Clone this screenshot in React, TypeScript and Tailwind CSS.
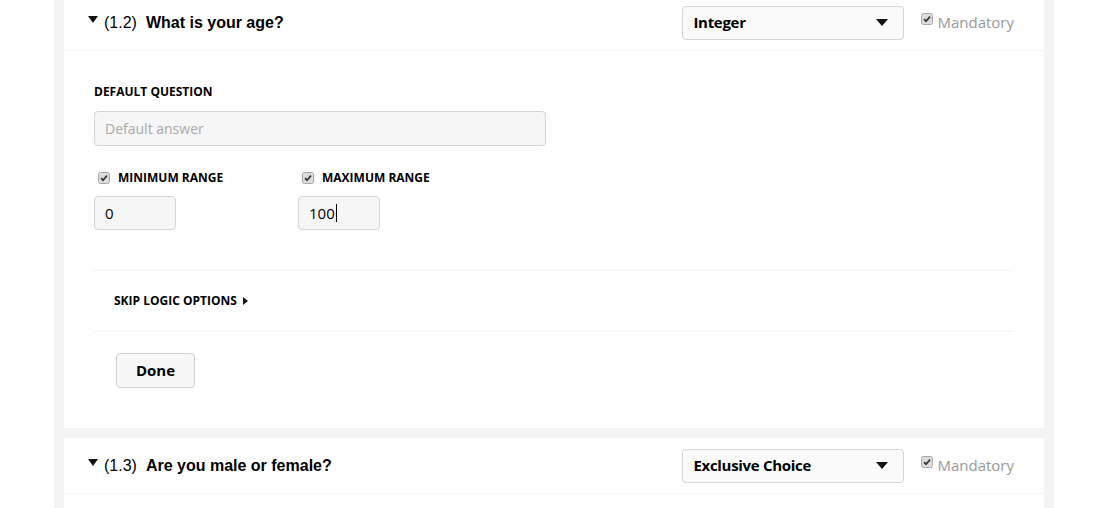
import React from "react";

const label = "font-['Open_Sans',sans-serif] text-[12px] font-bold uppercase leading-[18px] text-black";

function Caret({ w = 12 }: { w?: number }) {
  return (
    <svg width={w} height="7" viewBox="0 0 12 7" preserveAspectRatio="none" className="shrink-0">
      <path d="M0 0h12L6 7z" fill="#111" />
    </svg>
  );
}

function Check() {
  return (
    <svg width="12" height="12" viewBox="0 0 12 12" className="shrink-0">
      <rect x="0.5" y="0.5" width="11" height="11" rx="2" fill="#dcdcdc" stroke="#a8a8a8" />
      <path d="M3 6.2l2 2 4-4.6" fill="none" stroke="#333" strokeWidth="1.7" />
    </svg>
  );
}

function Header({ num, title, type }: { num: string; title: string; type: string }) {
  return (
    <header className="flex h-[56px] items-center border-b border-[#f4f4f4] pl-[24px] pr-[30px]">
      <div className="flex items-center font-['Liberation_Sans',sans-serif] text-[16px] text-black">
        <span className="-mt-[6px] mr-[6px]">
          <Caret w={10} />
        </span>
        <span>{num}</span>
        <span className="ml-[9px] font-bold">{title}</span>
      </div>
      <div className="ml-auto flex h-[34px] w-[222px] items-center justify-between rounded-[4px] border border-[#d5d5d5] bg-[#fafafa] pl-[10px] pr-[15px] font-['Open_Sans',sans-serif] text-[15px] font-bold tracking-[-0.3px] text-black">
        <span>{type}</span>
        <Caret />
      </div>
      <div className="ml-[17px] flex items-center gap-[4px] font-['Open_Sans',sans-serif] text-[15px] text-[#999]">
        <span className="-mt-[7px] flex">
          <Check />
        </span>
        <span>Mandatory</span>
      </div>
    </header>
  );
}

function Range({ title, value, caret }: { title: string; value: string; caret?: boolean }) {
  return (
    <div className="flex w-[204px] flex-col">
      <div className="flex items-center gap-[8px] pl-[4px]">
        <Check />
        <span className={label}>{title}</span>
      </div>
      <div className="mt-[9px] flex h-[34px] w-[82px] items-center rounded-[4px] border border-[#d5d5d5] bg-[#f6f6f6] px-[10px] font-['Open_Sans',sans-serif] text-[15px] text-black">
        {value}
        {caret && <span className="ml-[1px] h-[18px] w-px bg-black" />}
      </div>
    </div>
  );
}

export default function App() {
  return (
    <div className="h-[508px] w-full overflow-hidden bg-white">
      <div className="-mt-[5px] ml-[54px] flex w-[1000px] flex-col gap-[10px] bg-[#f4f4f4] px-[10px]">
        <section className="bg-white">
          <Header num="(1.2)" title="What is your age?" type="Integer" />
          <div className="px-[30px] pb-[40px] pt-[32px]">
            <div className={label}>Default question</div>
            <div className="mt-[10px] flex h-[35px] w-[452px] items-center rounded-[4px] border border-[#d5d5d5] bg-[#f6f6f6] px-[10px] font-['Open_Sans',sans-serif] text-[14px] text-[#aaa]">
              Default answer
            </div>
            <div className="mt-[23px] flex">
              <Range title="Minimum range" value="0" />
              <Range title="Maximum range" value="100" caret />
            </div>
            <div className="mt-[40px] border-t border-[#f2f2f2]" />
            <div className="flex h-[60px] items-center gap-[6px] pl-[20px]">
              <span className={label}>Skip logic options</span>
              <svg width="5" height="8" viewBox="0 0 5 8">
                <path d="M0 0l5 4-5 4z" fill="#111" />
              </svg>
            </div>
            <div className="border-t border-[#f2f2f2]" />
            <button className="ml-[22px] mt-[21px] flex h-[35px] w-[79px] items-center justify-center rounded-[4px] border border-[#d0d0d0] bg-[#f7f7f7] font-['Open_Sans',sans-serif] text-[15px] font-bold text-black">
              Done
            </button>
          </div>
        </section>
        <section className="h-[200px] bg-white">
          <Header num="(1.3)" title="Are you male or female?" type="Exclusive Choice" />
        </section>
      </div>
    </div>
  );
}
